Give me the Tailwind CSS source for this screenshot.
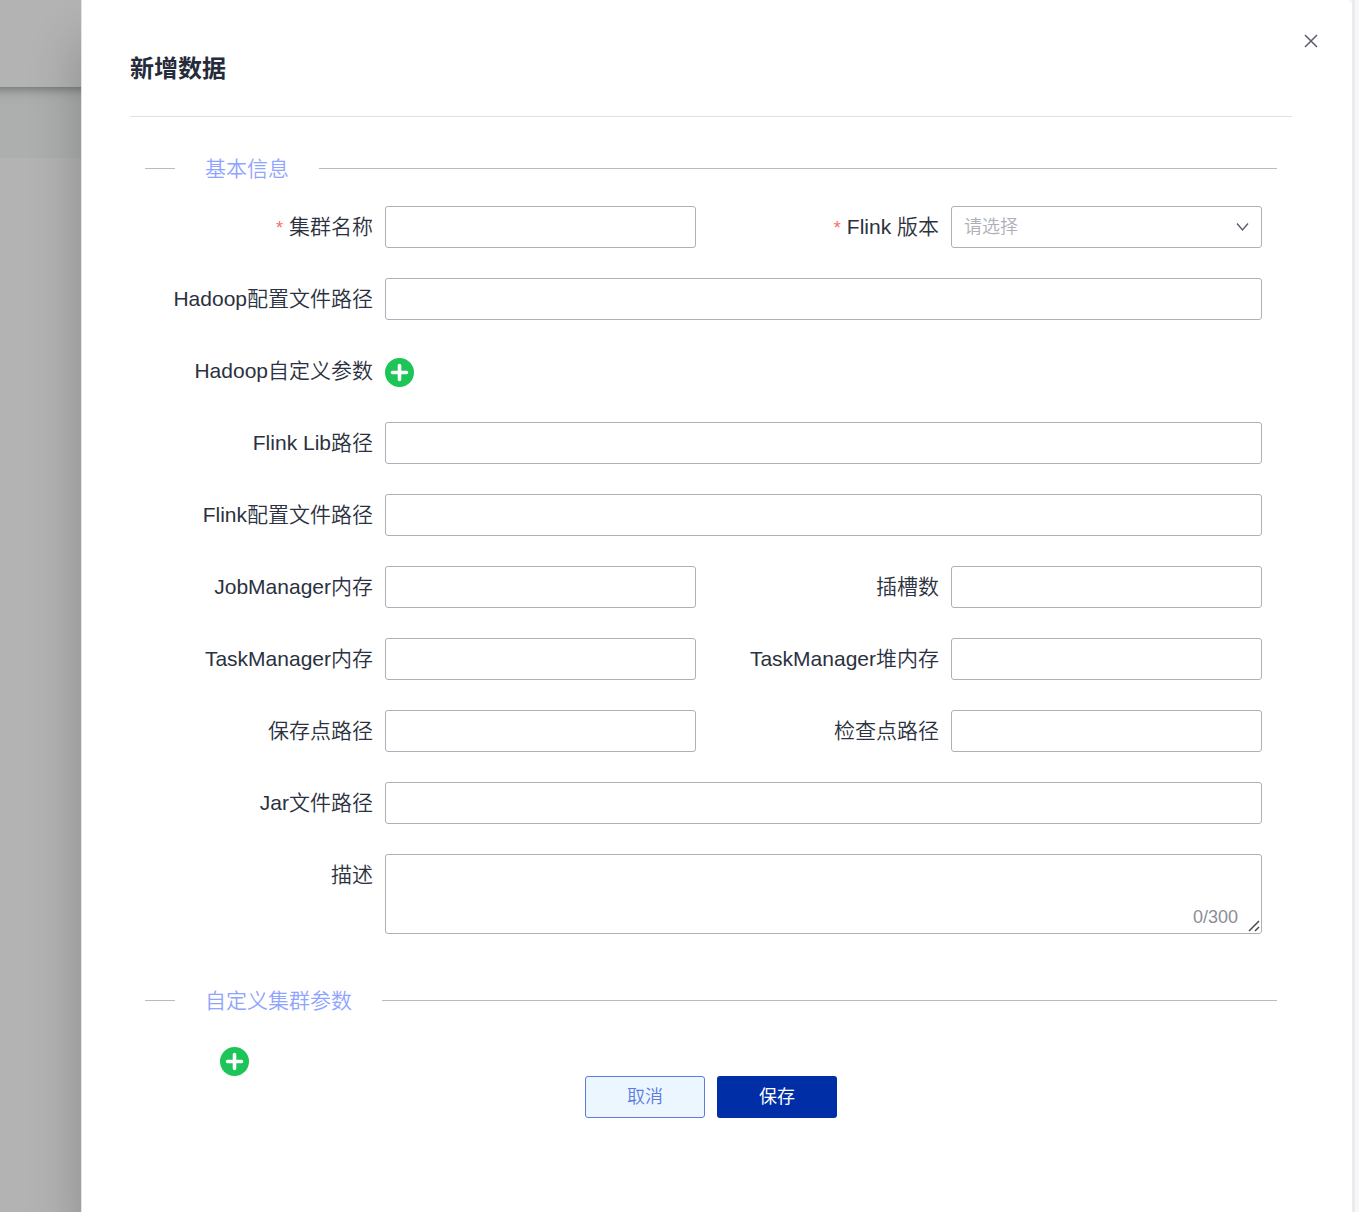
<!DOCTYPE html>
<html lang="zh-CN">

<head>
    <meta charset="UTF-8">
    <meta name="viewport" content="width=device-width, initial-scale=1.0">
    <title>新增数据</title>
    <script src="https://cdn.jsdelivr.net/npm/@tailwindcss/browser@4"></script>
    <style>
        * {
            font-family: "Liberation Sans", "Noto Sans CJK SC", sans-serif;
        }
    </style>
</head>

<body class="flex min-h-screen bg-[#f7f7f7] overflow-x-hidden text-[#2b3140]">
    <!-- dimmed page behind the drawer -->
    <div class="w-[81px] shrink-0 flex flex-col bg-[#b3b3b3] overflow-hidden">
        <div class="h-[87px] -mx-5 bg-[#b3b3b3] shadow-[0_0_12px_rgba(0,0,0,0.5)] z-10"></div>
        <div class="h-[71px] bg-[#acafad]"></div>
    </div>

    <main class="relative z-20 flex-1 min-w-0 bg-white rounded-tr-md border-l border-[#e4e4e6] pl-12 pr-[60px] pb-[94px] shadow-[-4px_40px_50px_rgba(0,0,0,0.2)]">
        <button type="button" aria-label="关闭" class="absolute top-8 right-8 w-[18px] h-[18px] flex items-center justify-center">
            <svg class="w-[14px] h-[14px]" viewBox="0 0 14 14" fill="none" stroke="#575d6c" stroke-width="1.5">
                <path d="M1 1L13 13M13 1L1 13" />
            </svg>
        </button>

        <h1 class="h-[117px] pt-[51px] border-b border-[#dfe1e6] text-2xl leading-9 font-bold text-[#252b3a]">新增数据</h1>

        <form class="pt-[31px]">
            <div class="px-[15px]">
                <div class="flex items-center gap-[30px] h-10">
                    <span class="w-[30px] h-px bg-[#babbc0]"></span>
                    <h2 class="pt-0.5 text-[21px] leading-8 font-[350] text-[#8fa4ff]">基本信息</h2>
                    <span class="flex-1 h-px bg-[#babbc0]"></span>
                </div>

                <div class="grid grid-cols-2 gap-y-[30px] pt-[18px] text-[21px] leading-[42px] font-[350]">
                    <div class="flex pr-[15px]">
                        <label for="name" class="w-[240px] pr-3 text-right"><span class="text-lg text-[#f66f6a] mr-[6px]">*</span>集群名称</label>
                        <input id="name" type="text" required class="flex-1 min-w-0 h-[42px] px-3 text-lg border border-[#adb0b8] rounded-[3px]">
                    </div>
                    <div class="flex pr-[15px]">
                        <label for="version" class="w-[240px] pr-3 text-right"><span class="text-lg text-[#f66f6a] mr-[6px]">*</span>Flink 版本</label>
                        <div class="relative flex-1 min-w-0">
                            <select id="version" required class="block appearance-none w-full h-[42px] px-3 text-lg text-[#adb0b8] bg-white border border-[#adb0b8] rounded-[3px]">
                                <option>请选择</option>
                            </select>
                            <svg class="absolute right-[13px] top-[15px] w-[13px] h-3 pointer-events-none" viewBox="0 0 13 12" fill="none" stroke="#575d6c" stroke-width="1.4">
                                <path d="M1 2.500L6.500 9L12 2.500" />
                            </svg>
                        </div>
                    </div>

                    <div class="col-span-2 flex pr-[15px]">
                        <label for="hadoop-conf" class="w-[240px] pr-3 text-right">Hadoop配置文件路径</label>
                        <input id="hadoop-conf" type="text" class="flex-1 min-w-0 h-[42px] px-3 text-lg border border-[#adb0b8] rounded-[3px]">
                    </div>

                    <div class="col-span-2 flex items-center pr-[15px]">
                        <span class="w-[240px] pr-3 text-right">Hadoop自定义参数</span>
                        <button type="button" aria-label="添加Hadoop参数" class="pt-[3px]">
                            <svg class="w-[29px] h-[29px]" viewBox="0 0 29 29">
                                <circle cx="14.500" cy="14.500" r="14.500" fill="#1dc558" />
                                <path d="M14.500 7.500V21.500M7.500 14.500H21.500" stroke="#fff" stroke-width="3.600" stroke-linecap="round" />
                            </svg>
                        </button>
                    </div>

                    <div class="col-span-2 flex pr-[15px]">
                        <label for="flink-lib" class="w-[240px] pr-3 text-right">Flink Lib路径</label>
                        <input id="flink-lib" type="text" class="flex-1 min-w-0 h-[42px] px-3 text-lg border border-[#adb0b8] rounded-[3px]">
                    </div>

                    <div class="col-span-2 flex pr-[15px]">
                        <label for="flink-conf" class="w-[240px] pr-3 text-right">Flink配置文件路径</label>
                        <input id="flink-conf" type="text" class="flex-1 min-w-0 h-[42px] px-3 text-lg border border-[#adb0b8] rounded-[3px]">
                    </div>

                    <div class="flex pr-[15px]">
                        <label for="jm-memory" class="w-[240px] pr-3 text-right">JobManager内存</label>
                        <input id="jm-memory" type="text" class="flex-1 min-w-0 h-[42px] px-3 text-lg border border-[#adb0b8] rounded-[3px]">
                    </div>
                    <div class="flex pr-[15px]">
                        <label for="slots" class="w-[240px] pr-3 text-right">插槽数</label>
                        <input id="slots" type="text" class="flex-1 min-w-0 h-[42px] px-3 text-lg border border-[#adb0b8] rounded-[3px]">
                    </div>

                    <div class="flex pr-[15px]">
                        <label for="tm-memory" class="w-[240px] pr-3 text-right">TaskManager内存</label>
                        <input id="tm-memory" type="text" class="flex-1 min-w-0 h-[42px] px-3 text-lg border border-[#adb0b8] rounded-[3px]">
                    </div>
                    <div class="flex pr-[15px]">
                        <label for="tm-heap" class="w-[240px] pr-3 text-right">TaskManager堆内存</label>
                        <input id="tm-heap" type="text" class="flex-1 min-w-0 h-[42px] px-3 text-lg border border-[#adb0b8] rounded-[3px]">
                    </div>

                    <div class="flex pr-[15px]">
                        <label for="savepoint" class="w-[240px] pr-3 text-right">保存点路径</label>
                        <input id="savepoint" type="text" class="flex-1 min-w-0 h-[42px] px-3 text-lg border border-[#adb0b8] rounded-[3px]">
                    </div>
                    <div class="flex pr-[15px]">
                        <label for="checkpoint" class="w-[240px] pr-3 text-right">检查点路径</label>
                        <input id="checkpoint" type="text" class="flex-1 min-w-0 h-[42px] px-3 text-lg border border-[#adb0b8] rounded-[3px]">
                    </div>

                    <div class="col-span-2 flex pr-[15px]">
                        <label for="jar-path" class="w-[240px] pr-3 text-right">Jar文件路径</label>
                        <input id="jar-path" type="text" class="flex-1 min-w-0 h-[42px] px-3 text-lg border border-[#adb0b8] rounded-[3px]">
                    </div>

                    <div class="col-span-2 flex pr-[15px]">
                        <label for="note" class="w-[240px] pr-3 text-right">描述</label>
                        <div class="relative flex-1 min-w-0">
                            <textarea id="note" maxlength="300" class="block w-full h-20 px-3 py-2 text-lg leading-7 border border-[#adb0b8] rounded-[3px] resize-none"></textarea>
                            <span class="absolute right-6 bottom-1 text-lg leading-[26px] text-[#8a8e99] pointer-events-none">0/300</span>
                            <svg class="absolute right-0.5 bottom-0.5 w-3 h-3 pointer-events-none" viewBox="0 0 12 12" fill="none" stroke="#4a4a4a" stroke-width="1.500">
                                <path d="M1 11L11 1M7 11L11 7" />
                            </svg>
                        </div>
                    </div>
                </div>

                <div class="flex items-center gap-[30px] h-10 mt-[46px]">
                    <span class="w-[30px] h-px bg-[#babbc0]"></span>
                    <h2 class="pt-0.5 text-[21px] leading-8 font-[350] text-[#8fa4ff]">自定义集群参数</h2>
                    <span class="flex-1 h-px bg-[#babbc0]"></span>
                </div>

                <button type="button" aria-label="添加集群参数" class="block mt-[27px] ml-[75px]">
                    <svg class="w-[29px] h-[29px]" viewBox="0 0 29 29">
                        <circle cx="14.500" cy="14.500" r="14.500" fill="#1dc558" />
                        <path d="M14.500 7.500V21.500M7.500 14.500H21.500" stroke="#fff" stroke-width="3.600" stroke-linecap="round" />
                    </svg>
                </button>
            </div>

            <div class="flex justify-center gap-3 text-lg">
                <button type="button" class="w-[120px] h-[42px] font-[350] text-[#5e7ce0] bg-[#ebf6ff] border border-[#5e7ce0] rounded-[3px]">取消</button>
                <button type="submit" class="w-[120px] h-[42px] text-white bg-[#002ea6] rounded-[3px]">保存</button>
            </div>
        </form>
    </main>

    <!-- page edge to the right of the drawer -->
    <div class="relative z-30 w-[7px] shrink-0 bg-[#f7f7f7] border-l-3 border-[#e8ecf0]"></div>
</body>

</html>
